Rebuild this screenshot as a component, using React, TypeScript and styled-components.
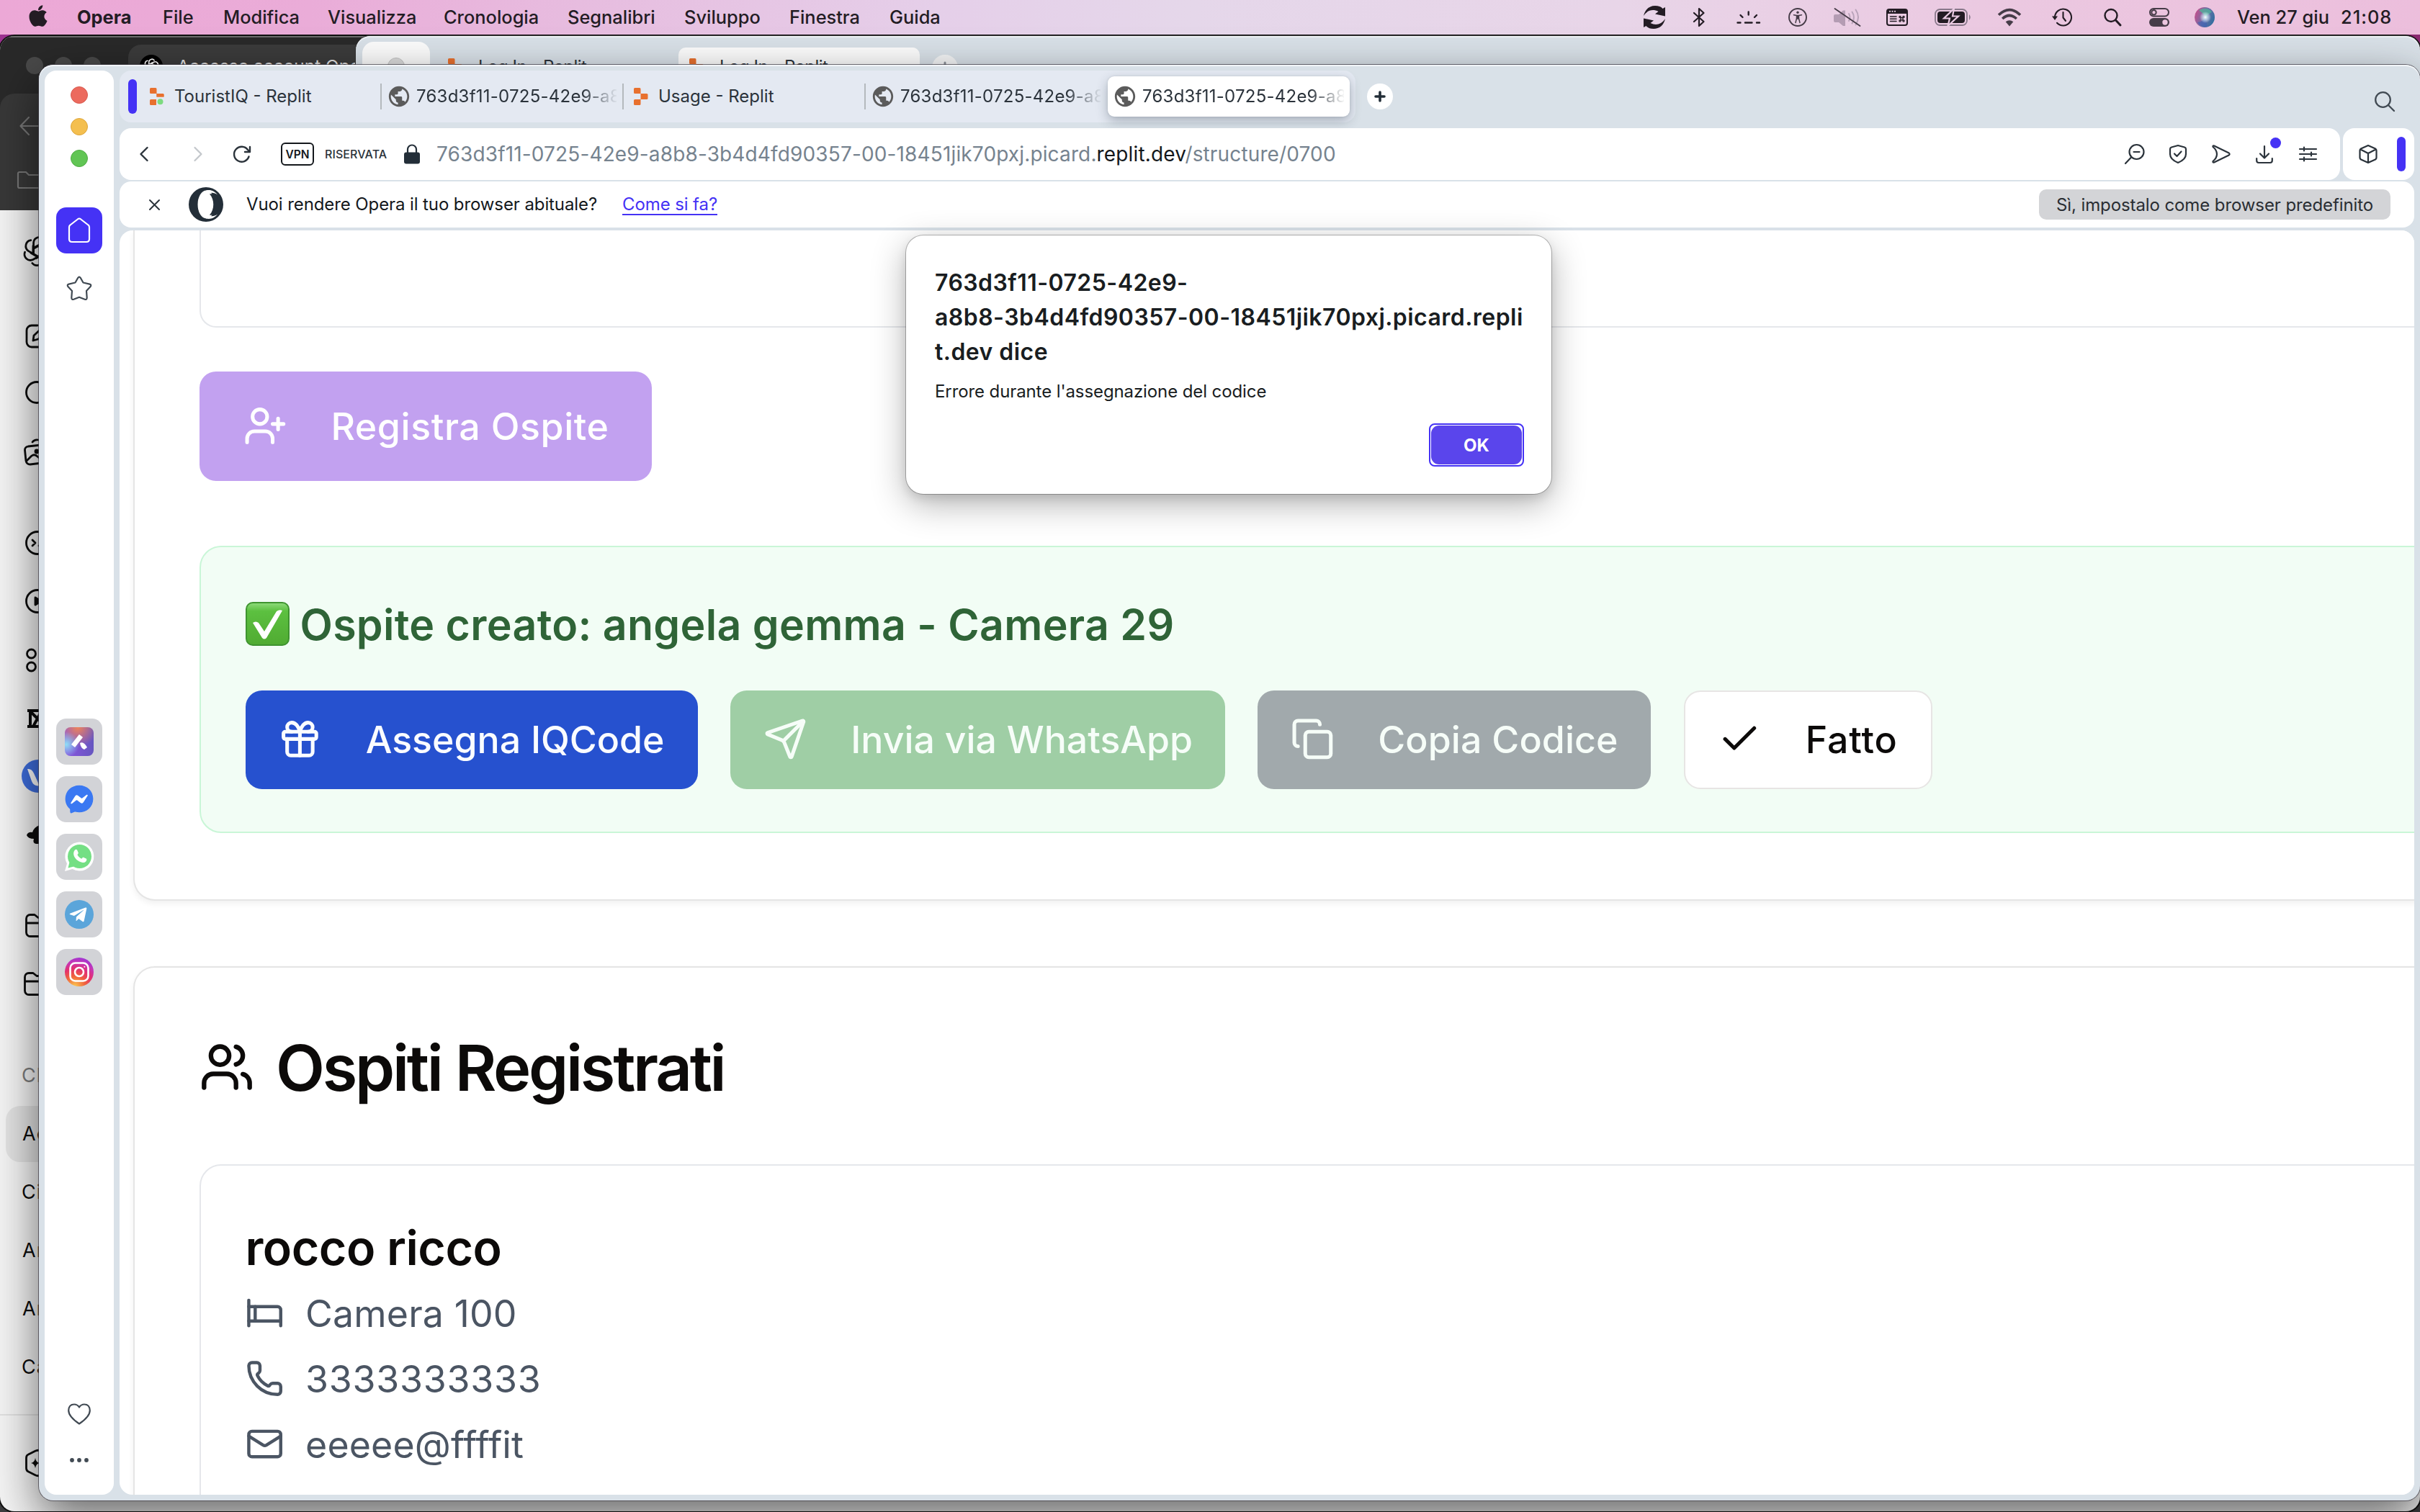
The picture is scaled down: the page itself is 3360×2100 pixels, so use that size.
import React from "react";
import styled, { createGlobalStyle, css } from "styled-components";
import { Bed, Check, Copy, Gift, Mail, Phone, Send, UserPlus, Users } from "lucide-react";
import { FaApple, FaFacebookMessenger, FaTelegramPlane } from "react-icons/fa";
import { MdPublic } from "react-icons/md";

const Global = createGlobalStyle`
  * { box-sizing: border-box; }
  html, body { margin: 0; padding: 0; }
  body { width: 3360px; height: 2100px; overflow: hidden; }
  body, button { font-family: Inter, "Liberation Sans", sans-serif; }
  svg { display: block; flex: none; overflow: visible; }
`;

const Desktop = styled.div`
  position: relative;
  width: 3360px;
  height: 2100px;
  overflow: hidden;
  background: linear-gradient(90deg, #9c3290 0, #7a2068 40%, #8a2a70 100%) 0 0 / 100% 100px no-repeat, #3c3c3e;
`;

/* ---------- macOS menu bar ---------- */

const MenuBar = styled.header`
  display: flex;
  align-items: center;
  height: 48px;
  padding-left: 39px;
  color: #231c24;
  font-size: 25.4px;
  font-weight: 500;
  background: linear-gradient(90deg, #eca8d6 0, #eaacd8 430px, #e7bcdf 800px, #e5cfe9 1300px, #e5d7ea 1650px, #e8d5e8 2250px, #ebc9e1 2750px, #ecbedc 3360px);
`;
const AppleSlot = styled.span`
  width: 68px;
  padding-bottom: 5px;
`;
const AppleIcon = styled(FaApple)`
  margin-left: -3px;
`;
const MenuItem = styled.span<{ $w: number; $bold?: boolean }>`
  width: ${(p) => p.$w}px;
  margin-top: -2px;
  white-space: nowrap;
  font-weight: ${(p) => (p.$bold ? 700 : 500)};
`;
const StatusArea = styled.div`
  display: flex;
  align-items: center;
  height: 48px;
  margin-left: auto;
  padding-right: 36px;
`;
const StatusSlot = styled.span<{ $w: number; $ml?: number }>`
  display: flex;
  justify-content: center;
  width: ${(p) => p.$w}px;
  margin-left: ${(p) => p.$ml ?? 0}px;
`;
const ClockText = styled.span<{ $w: number; $ls?: number }>`
  width: ${(p) => p.$w}px;
  margin-top: -2px;
  letter-spacing: ${(p) => p.$ls ?? 0}px;
  white-space: nowrap;
`;

/* ---------- windows in the background ---------- */

const ChatWindow = styled.section`
  position: absolute;
  left: 0;
  top: 50px;
  width: 3360px;
  height: 2049px;
  display: flex;
  flex-direction: column;
  overflow: hidden;
  border-radius: 20px;
  background: #f4f4f4;
  box-shadow: 0 0 0 2px #111;
`;
const ChatTabs = styled.div`
  display: flex;
  height: 80px;
  padding: 12px 0 0 36px;
  background: #292929;
  box-shadow: inset 0 2px 0 #6c6c6c;
`;
const DimLights = styled.div`
  display: flex;
  gap: 16px;
  padding-top: 17px;
  width: 142px;
`;
const DimLight = styled.i`
  width: 24px;
  height: 24px;
  border-radius: 50%;
  background: #494949;
`;
const ChatTab = styled.div`
  display: flex;
  align-items: center;
  gap: 20px;
  width: 420px;
  padding: 0 0 8px 16px;
  border-radius: 18px 18px 0 0;
  background: #3b3b3b;
  color: #e3e3e3;
  font-size: 24.4px;
  white-space: nowrap;
`;
const ChatToolbarWrap = styled.div`
  background: #292929;
`;
const ChatToolbar = styled.div`
  display: flex;
  flex-direction: column;
  height: 162px;
  padding: 32px 0 0 27px;
  gap: 50px;
  border-radius: 20px 0 0 0;
  background: #383838;
`;
const ToolbarFolder = styled.svg`
  margin-left: -3px;
`;
const ChatRail = styled.nav`
  display: flex;
  flex-direction: column;
  width: 520px;
  color: #0d0d0d;
`;
const RailItem = styled.div<{ $mt?: number; $active?: boolean; $muted?: boolean; $pl?: number }>`
  display: flex;
  align-items: center;
  height: 78px;
  margin-top: ${(p) => p.$mt ?? 3}px;
  padding-left: ${(p) => p.$pl ?? 35}px;
  padding-bottom: 2px;
  font-size: 27px;
  letter-spacing: 1px;
  color: ${(p) => (p.$muted ? "#7d7d7d" : "#0d0d0d")};
  ${(p) =>
    p.$active &&
    css`
      margin-left: 8px;
      border-radius: 20px;
      background: #e3e3e3;
      padding-left: ${(p.$pl ?? 31) - 8}px;
    `}
`;
const RailFooter = styled.div`
  display: flex;
  align-items: center;
  height: 134px;
  margin-top: 26px;
  padding-left: 35px;
  border-top: 2px solid #e0e0e0;
`;

const RearWindow = styled.section`
  position: absolute;
  left: 494px;
  top: 50px;
  width: 2866px;
  height: 300px;
  display: flex;
  align-items: flex-start;
  padding: 8px 8px 0 9px;
  border-radius: 20px 20px 0 0;
  background: #d9e1e8;
  box-shadow: 0 0 0 1px #333, inset 0 2px 0 #eef2f5;
`;
const RearRail = styled.div`
  width: 94px;
  height: 250px;
  padding: 22px 0 0 35px;
  border-radius: 16px;
  background: #fcfcfc;
`;
const RearDot = styled.i`
  display: block;
  width: 24px;
  height: 24px;
  border-radius: 50%;
  background: #dcdcdc;
  border: 1px solid #c4c4c4;
`;
const RearTab = styled.div<{ $active?: boolean }>`
  display: flex;
  align-items: center;
  gap: 22px;
  width: 335px;
  height: 56px;
  margin: 8px 0 0 ${(p) => (p.$active ? 0 : 10)}px;
  padding: 0 0 3px 15px;
  border-radius: 10px;
  font-size: 24px;
  letter-spacing: -0.5px;
  color: #2b333b;
  background: ${(p) => (p.$active ? "#fdfdfd" : "transparent")};
`;
const RearPlus = styled.div`
  display: grid;
  place-items: center;
  width: 36px;
  height: 36px;
  margin: 18px 0 0 17px;
  border-radius: 50%;
  background: #f4f5f6;
`;

/* ---------- Opera window ---------- */

const OperaWindow = styled.section`
  position: absolute;
  left: 54px;
  top: 90px;
  width: 3306px;
  height: 1994px;
  display: flex;
  gap: 8px;
  padding: 8px;
  border-radius: 20px;
  background: #d9e1e8;
  box-shadow: 0 0 0 1px rgba(60, 55, 65, 0.7), inset 0 2px 0 #f2f5f8, 0 24px 64px rgba(0, 0, 0, 0.58);
`;
const Sidebar = styled.nav`
  display: flex;
  flex-direction: column;
  align-items: center;
  width: 96px;
  padding: 22px 0 45px;
  border-radius: 16px;
  background: #fff;
`;
const Light = styled.i<{ $c: string; $edge: string }>`
  width: 24px;
  height: 24px;
  margin-bottom: 20px;
  border-radius: 50%;
  background: ${(p) => p.$c};
  border: 1px solid ${(p) => p.$edge};
`;
const HomeTile = styled.div`
  display: grid;
  place-items: center;
  width: 64px;
  height: 64px;
  margin-top: 36px;
  border-radius: 14px;
  background: #4532f5;
`;
const StarSlot = styled.div`
  height: 37px;
  margin-top: 31px;
`;
const AppTiles = styled.div`
  display: flex;
  flex-direction: column;
  gap: 16px;
  margin-top: 578px;
`;
const AppTile = styled.div`
  display: grid;
  place-items: center;
  width: 64px;
  height: 64px;
  border-radius: 14px;
  background: #d2d3d7;
`;
const AppDisc = styled.span<{ $bg: string; $r?: string }>`
  display: grid;
  place-items: center;
  width: 40px;
  height: 40px;
  border-radius: ${(p) => p.$r ?? "50%"};
  background: ${(p) => p.$bg};
  color: #fff;
`;
const Plane = styled(FaTelegramPlane)`
  margin-left: -3px;
`;
const SidebarFoot = styled.div`
  display: flex;
  flex-direction: column;
  align-items: center;
  gap: 46px;
  margin-top: auto;
`;
const Main = styled.div`
  display: flex;
  flex-direction: column;
  flex: 1;
  min-width: 0;
`;
const TabRow = styled.div`
  display: flex;
  height: 80px;
`;
const TabGroup = styled.div`
  display: flex;
  align-items: center;
  width: 1716px;
  height: 72px;
  padding: 0 8px 0 12px;
  border-radius: 16px;
  background: #e4e9f2;
`;
const IslandBar = styled.i<{ $h: number }>`
  width: 12px;
  height: ${(p) => p.$h}px;
  border-radius: 6px;
  background: #4532f5;
  flex: none;
`;
const Tab = styled.div<{ $active?: boolean; $ml?: number }>`
  display: flex;
  align-items: center;
  gap: 10px;
  width: ${(p) => (p.$active ? 336 : 334)}px;
  height: 56px;
  margin-left: ${(p) => p.$ml ?? 0}px;
  padding: 0 8px 0 10px;
  font-size: 24px;
  color: #2b333b;
  flex: none;
  ${(p) =>
    p.$active &&
    css`
      border-radius: 9px;
      background: #fff;
      box-shadow: 0 6px 16px rgba(40, 55, 70, 0.32), 0 0 3px rgba(40, 55, 70, 0.15);
    `}
`;
const TabIcon = styled.span`
  display: flex;
  align-items: center;
  justify-content: center;
  width: 28px;
  height: 28px;
  flex: none;
  color: #5b5b5b;
`;
const TabTitle = styled.span<{ $fade?: boolean }>`
  flex: 1;
  overflow: hidden;
  white-space: nowrap;
  line-height: 36px;
  ${(p) =>
    p.$fade &&
    css`
      letter-spacing: 0.24px;
      mask-image: linear-gradient(90deg, #000 calc(100% - 48px), transparent calc(100% + 2px));
    `}
`;
const TabSeparator = styled.i`
  width: 2px;
  height: 36px;
  background: #b4b9bd;
  flex: none;
`;
const NewTab = styled.div`
  display: grid;
  place-items: center;
  width: 36px;
  height: 36px;
  margin: 18px 0 0 16px;
  border-radius: 50%;
  background: #fff;
`;
const TabSearch = styled.div`
  margin: 29px 27px 0 auto;
`;
const AddressRow = styled.div`
  display: flex;
  gap: 4px;
  height: 72px;
`;
const AddressBar = styled.div`
  display: flex;
  align-items: center;
  flex: 1;
  padding: 0 29px 0 26px;
  border-radius: 16px;
  background: #fff;
`;
const AddressSlot = styled.span<{ $w: number; $ml?: number }>`
  display: flex;
  justify-content: center;
  width: ${(p) => p.$w}px;
  margin-left: ${(p) => p.$ml ?? 0}px;
`;
const Vpn = styled.span`
  display: grid;
  place-items: center;
  width: 46px;
  height: 32px;
  margin-left: 41px;
  border: 2px solid #14181c;
  border-radius: 6px;
  font-size: 15.5px;
  font-weight: 600;
  color: #14181c;
`;
const PrivateLabel = styled.span`
  width: 90px;
  margin-left: 15px;
  font-size: 16px;
  font-weight: 500;
  letter-spacing: 0.1px;
  color: #2b333b;
`;
const Url = styled.span`
  margin-left: 22px;
  font-size: 28px;
  letter-spacing: 0.14px;
  color: #76838f;
  white-space: nowrap;
  b {
    font-weight: 400;
    color: #14181c;
  }
`;
const AddressActions = styled.div`
  display: flex;
  align-items: center;
  gap: 28px;
  margin-left: auto;
`;
const ActionSlot = styled.span`
  position: relative;
  display: flex;
  justify-content: center;
  width: 32px;
`;
const Badge = styled.i`
  position: absolute;
  right: -7px;
  top: -11px;
  width: 15px;
  height: 15px;
  border-radius: 50%;
  background: #4532f5;
`;
const AddressSide = styled.div`
  display: flex;
  align-items: center;
  justify-content: space-between;
  width: 99px;
  padding: 0 12px 0 22px;
  border-radius: 16px;
  background: #fff;
`;
const InfoBar = styled.div`
  display: flex;
  align-items: center;
  height: 64px;
  margin: 2px 0 4px;
  padding: 0 33px 0 41px;
  border-radius: 16px;
  background: #fff;
  font-size: 24px;
  letter-spacing: -0.1px;
  color: #14181c;
`;
const InfoText = styled.span`
  width: 522px;
  margin-left: 32px;
  margin-top: -1px;
  white-space: nowrap;
`;
const InfoLink = styled.span`
  color: #4532f5;
  border-bottom: 2px solid #4532f5;
  line-height: 26px;
  margin-top: 1px;
`;
const InfoButton = styled.button`
  width: 488px;
  height: 42px;
  margin-left: auto;
  padding: 0;
  border: 0;
  border-radius: 10px;
  background: #d3d4d7;
  font-size: 24px;
  letter-spacing: -0.1px;
  color: #2a2e33;
  white-space: nowrap;
`;

/* ---------- page ---------- */

const Page = styled.main`
  position: relative;
  flex: 1;
  min-height: 0;
  overflow: hidden;
  padding-left: 19px;
  border-radius: 18px;
  background: #fff;
`;
const Card = styled.section<{ $cut?: boolean }>`
  width: 3500px;
  padding: ${(p) => (p.$cut ? "0 90px 92px" : "92px 90px 200px")};
  margin-bottom: 91px;
  border: 2px solid #e5e5e5;
  border-radius: 30px;
  background: #fff;
  box-shadow: 0 4px 8px rgba(0, 0, 0, 0.06);
  ${(p) =>
    p.$cut &&
    css`
      border-top: 0;
      border-top-left-radius: 0;
    `}
`;
const FieldTail = styled.div`
  height: 135px;
  border: 2px solid #e5e7eb;
  border-top: 0;
  border-radius: 0 0 23px 23px;
`;
const Btn = styled.button<{ $w: number; $h?: number; $bg: string; $c: string; $outline?: boolean; $pad?: number; $ls?: number }>`
  display: flex;
  align-items: center;
  gap: 60.8px;
  width: ${(p) => p.$w}px;
  height: ${(p) => p.$h ?? 136.5}px;
  padding: 0 0 1px ${(p) => p.$pad ?? 45.6}px;
  border: ${(p) => (p.$outline ? "2px solid #e7e5e4" : "0")};
  border-radius: 22.8px;
  background: ${(p) => p.$bg};
  color: ${(p) => p.$c};
  font-size: 51.8px;
  font-weight: 500;
  letter-spacing: ${(p) => p.$ls ?? 0}px;
  white-space: nowrap;
  svg {
    width: 60.8px;
    height: 60.8px;
  }
`;
const RegisterWrap = styled.div`
  padding: 61px 0 90px;
`;
const SuccessPanel = styled.div`
  height: 399px;
  padding: 61px 61.5px;
  border: 2px solid #c9f6d7;
  border-radius: 30px;
  background: #f2fdf5;
`;
const SuccessTitle = styled.h4`
  display: flex;
  align-items: center;
  gap: 15px;
  height: 91px;
  margin: 0 0 47px;
  font-size: 59px;
  font-weight: 600;
  letter-spacing: 0.3px;
  color: #2f6437;
`;
const TitleText = styled.span`
  padding-top: 1px;
`;
const ButtonRow = styled.div`
  display: flex;
  gap: 45.5px;
`;
const CardTitle = styled.h3`
  display: flex;
  align-items: center;
  gap: 30px;
  height: 91px;
  margin: 0 0 90px;
  font-size: 88.4px;
  font-weight: 600;
  letter-spacing: -3.25px;
  color: #0c0a09;
`;
const GuestCard = styled.article`
  height: 700px;
  padding: 61px 61.5px;
  border: 2px solid #e5e7eb;
  border-radius: 30px;
`;
const GuestName = styled.h4`
  margin: 0;
  font-size: 66.3px;
  line-height: 106px;
  font-weight: 600;
  letter-spacing: -0.5px;
  color: #0c0a09;
`;
const GuestRow = styled.p<{ $ls?: number }>`
  display: flex;
  align-items: center;
  gap: 30.4px;
  height: 76px;
  margin: 0 0 15px;
  font-size: 51.8px;
  letter-spacing: ${(p) => p.$ls ?? 0.15}px;
  color: #4b5563;
  svg {
    width: 53.2px;
    height: 53.2px;
  }
`;

/* ---------- alert ---------- */

const Dialog = styled.div`
  position: absolute;
  left: 1204px;
  top: 237px;
  width: 896px;
  height: 359px;
  display: flex;
  flex-direction: column;
  padding: 42px 38px 38px 40px;
  border-radius: 24px;
  background: #fff;
  box-shadow: 0 0 0 1px rgba(0, 0, 0, 0.26), 0 14px 48px rgba(0, 0, 0, 0.3), 0 6px 14px rgba(0, 0, 0, 0.1);
  color: #191d21;
`;
const DialogTitle = styled.h2`
  margin: 0;
  font-size: 32px;
  line-height: 48px;
  font-weight: 600;
  letter-spacing: 0.45px;
  white-space: nowrap;
`;
const DialogText = styled.p`
  margin: 13px 0 0;
  font-size: 24px;
  line-height: 36px;
  letter-spacing: -0.1px;
`;
const OkRing = styled.div`
  align-self: flex-end;
  display: flex;
  width: 132px;
  height: 60px;
  margin-top: auto;
  padding: 1px;
  border: 2px solid #4532f5;
  border-radius: 8px;
`;
const OkButton = styled.button`
  flex: 1;
  border: 0;
  border-radius: 11px;
  background: #5a45ec;
  color: #fff;
  font-size: 24px;
  font-weight: 700;
`;

/* ---------- drawings ---------- */

const stroke = (w: number, c = "currentColor") =>
  ({ fill: "none", stroke: c, strokeWidth: w, strokeLinecap: "round", strokeLinejoin: "round" }) as const;

const ReplitMark = ({ live }: { live?: boolean }) => (
  <svg width="20" height="24" viewBox="0 0 20 24">
    <path d="M1.500 0H8a1.500 1.500 0 0 1 1.500 1.500V8H1.500A1.500 1.500 0 0 1 0 6.500V1.500A1.500 1.500 0 0 1 1.500 0z" fill="#e8702e" />
    <path d="M9.500 8H18a1.500 1.500 0 0 1 1.500 1.500V14.500A1.500 1.500 0 0 1 18 16H9.500z" fill="#e8702e" />
    <path d="M1.500 16H9.500V22.500A1.500 1.500 0 0 1 8 24H1.500A1.500 1.500 0 0 1 0 22.500V17.500A1.500 1.500 0 0 1 1.500 16z" fill="#e8702e" />
    {live && <path d="M9 12.500h11V24H9z" fill="#e4e9f2" />}
    {live && <path d="M9.500 8H18a1.500 1.500 0 0 1 1.500 1.500V12.500H9.500z" fill="#e8702e" />}
    {live && <circle cx="14.500" cy="19.300" r="4" fill="#7ddb80" />}
  </svg>
);

const StatusIcons = () => (
  <>
    <StatusSlot $w={30}>
      <svg width="30" height="32" viewBox="0 0 30 32" fill="#231c24">
        <path d="M0 14C2 5 8 0 16 0c5 0 8 1 10.500 4L30 2v12.500L16 11.500l4.500-3.500C13 4 5 6 0 14z" />
        <path d="M30 18c-2 9-8 14-16 14-5 0-8-1-10.500-4L0 30V17.500l14 3-4.500 3.500C17 28 25 26 30 18z" />
      </svg>
    </StatusSlot>
    <StatusSlot $w={16} $ml={39}>
      <svg width="16" height="26" viewBox="0 0 16 26" {...stroke(2.2)}>
        <path d="M1 7l13.500 12L8 25V1l6.500 6L1 19" />
      </svg>
    </StatusSlot>
    <StatusSlot $w={33} $ml={44}>
      <svg width="33" height="18" viewBox="0 0 33 18" {...stroke(2.4)}>
        <path d="M1.500 16.500h4M12 16.500h9.500M28 16.500h4M16.700 1.500v4M5.500 6l3 3M28 6l-3 3" />
      </svg>
    </StatusSlot>
    <StatusSlot $w={26} $ml={39}>
      <svg width="26" height="26" viewBox="0 0 26 26" {...stroke(1.9, "#463c48")}>
        <circle cx="13" cy="13" r="12" />
        <circle cx="13" cy="6.300" r="1.700" fill="#463c48" stroke="none" />
        <path d="M7.500 9.700l4 .8h3l4-.8M11.500 10.500v4l-1.500 6M14.500 10.500v4l1.500 6M13 10.500v5" strokeWidth="1.500" />
      </svg>
    </StatusSlot>
    <StatusSlot $w={38} $ml={37}>
      <svg width="38" height="26" viewBox="0 0 38 26">
        <path d="M2 9h5l6-5.500h3V25h-3l-6-5H2q-2 0-2-2v-7q0-2 2-2z" fill="#b49cb3" />
        <g {...stroke(2, "#b9a3ba")}>
          <path d="M21 8q3 5 0 10M25.500 5.500q5 7.500 0 16M30.500 2.500q7 10 0 21" />
        </g>
        <path d="M1.500 1l35 24" {...stroke(1.8, "#463c48")} />
      </svg>
    </StatusSlot>
    <StatusSlot $w={30} $ml={35}>
      <svg width="30" height="24" viewBox="0 0 30 24">
        <rect x="1" y="1" width="28" height="22" rx="3" {...stroke(2)} />
        <path d="M1 1h28v6H1z" fill="#231c24" />
        <circle cx="5" cy="3.800" r="1.100" fill="#e8d0e6" />
        <circle cx="8.500" cy="3.800" r="1.100" fill="#e8d0e6" />
        <circle cx="12" cy="3.800" r="1.100" fill="#e8d0e6" />
        <path d="M5.500 11H14M5.500 14.200H14M5.500 17.400H14" {...stroke(1.5)} />
        <path d="M20 12.500v3.500M23 12.500v3.500M19.800 12.700h3.500M19.800 15.800h3.500" {...stroke(1.3)} />
        <g {...stroke(1.3)}>
          <circle cx="19" cy="11.600" r="1.100" />
          <circle cx="24" cy="11.600" r="1.100" />
          <circle cx="19" cy="17" r="1.100" />
          <circle cx="24" cy="17" r="1.100" />
        </g>
      </svg>
    </StatusSlot>
    <StatusSlot $w={51} $ml={37}>
      <svg width="51" height="24" viewBox="0 0 51 24">
        <rect x="1" y="1" width="44" height="22" rx="6.500" {...stroke(1.8, "#88788a")} />
        <rect x="4" y="4" width="38" height="16" rx="4" fill="#231c24" />
        <path d="M48 8q3.500 4 0 8z" fill="#88788a" />
        <path d="M27 0L13 13.500h8L18.500 24 33 10.500h-8z" fill="#231c24" stroke="#e9cae2" strokeWidth="2.200" />
      </svg>
    </StatusSlot>
    <StatusSlot $w={34} $ml={36}>
      <svg width="34" height="25" viewBox="0 0 34 25">
        <g {...stroke(3.6, "#463c48")} strokeLinecap="butt">
          <path d="M2 8.800q15-14.500 30 0M7.200 14q9.800-9 19.600 0" />
        </g>
        <path d="M17 24.500l-5.300-6.300q5.300-4 10.600 0z" fill="#463c48" />
      </svg>
    </StatusSlot>
    <StatusSlot $w={28} $ml={42}>
      <svg width="28" height="26" viewBox="0 0 28 26" {...stroke(2.1)}>
        <path d="M4 13A11.500 11.500 0 1 1 7 20.800M15.500 6v7.500l3.500 4.500" />
        <path d="M0 11.500h8L4 17z" fill="#231c24" stroke="none" />
      </svg>
    </StatusSlot>
    <StatusSlot $w={25} $ml={44}>
      <svg width="25" height="26" viewBox="0 0 25 26" {...stroke(2.4)}>
        <circle cx="10" cy="10.500" r="8.500" />
        <path d="M16.500 17l6.500 7" strokeWidth="3" />
      </svg>
    </StatusSlot>
    <StatusSlot $w={28} $ml={38}>
      <svg width="28" height="26" viewBox="0 0 28 26">
        <rect x="1" y="1" width="26" height="10.500" rx="5.200" {...stroke(2, "#463c48")} />
        <circle cx="6.500" cy="6.200" r="3.200" {...stroke(2, "#463c48")} />
        <rect x="0" y="14" width="28" height="12" rx="6" fill="#463c48" />
        <circle cx="22" cy="20" r="3.700" fill="#ecc6df" />
      </svg>
    </StatusSlot>
    <StatusSlot $w={28} $ml={35}>
      <svg width="28" height="28" viewBox="0 0 28 28">
        <defs>
          <linearGradient id="siri" x1="0" y1="0.3" x2="1" y2="0.7">
            <stop offset="0" stopColor="#c4508c" />
            <stop offset="0.5" stopColor="#6d6fa8" />
            <stop offset="1" stopColor="#2c6f9e" />
          </linearGradient>
          <radialGradient id="siriGlow">
            <stop offset="0" stopColor="#fff" />
            <stop offset="0.4" stopColor="#d9f0fa" stopOpacity="0.7" />
            <stop offset="1" stopColor="#fff" stopOpacity="0" />
          </radialGradient>
        </defs>
        <circle cx="14" cy="14" r="14" fill="url(#siri)" />
        <path d="M6 4.500a13 13 0 0 1 18 2q-6 4-9 8-2-6-9-10z" fill="#4fb39a" opacity="0.75" />
        <path d="M4 21q8-1 11-7l3 13q-9 2-14-6z" fill="#3a63b4" opacity="0.6" />
        <circle cx="15" cy="14" r="8" fill="url(#siriGlow)" />
      </svg>
    </StatusSlot>
  </>
);

const knotPetals = [0, 60, 120, 180, 240, 300].map((a) => (
  <path key={a} transform={`rotate(${a} 24 24)`} d="M17 20V11a9 9 0 0 1 16-5M17 20l8-4.500 10 6" />
));

const Folder = () => (
  <svg width="40" height="34" viewBox="0 0 40 34" {...stroke(2.8)}>
    <path d="M1.500 7a5.500 5.500 0 0 1 5.500-5.500h6l5 4h14a5.500 5.500 0 0 1 5.500 5.500v15a5.500 5.500 0 0 1-5.500 5.500H7a5.500 5.500 0 0 1-5.500-5.500zM1.500 13h36" />
  </svg>
);

const OperaO = () => (
  <svg width="48" height="48" viewBox="0 0 48 48">
    <circle cx="24" cy="24" r="24" fill="#232e38" />
    <ellipse cx="24.500" cy="24" rx="12" ry="19.500" fill="#fff" />
    <path d="M24 4.500c7-1.500 12 1 16 6-4-3-9-3.500-13-1.500zM24 43.500c7 1.500 12-1 16-6-4 3-9 3.500-13 1.500z" fill="#fff" />
    <path d="M29 9.500C36 17 36 31 29 38.500c5 1 9-2 11-5 3-6 3-13 0-19-2-3-6-6-11-5z" fill="#232e38" />
  </svg>
);

const GreenCheck = () => (
  <svg width="61" height="61" viewBox="0 0 61 61">
    <defs>
      <linearGradient id="gc" x1="0" y1="0" x2="0" y2="1">
        <stop offset="0" stopColor="#8fdc7c" />
        <stop offset="0.2" stopColor="#5cc040" />
        <stop offset="1" stopColor="#50ab32" />
      </linearGradient>
    </defs>
    <rect x="1" y="1" width="59" height="59" rx="9" fill="url(#gc)" stroke="#3f9430" strokeWidth="2" />
    <path d="M10 29q4-3 8 0l8 12L43 13q4-3 8-1L29 50q-3 3-6 0z" fill="#fff" />
  </svg>
);

const menus: [string, number, boolean?][] = [
  ["Opera", 119, true],
  ["File", 84],
  ["Modifica", 145],
  ["Visualizza", 161],
  ["Cronologia", 172],
  ["Segnalibri", 162],
  ["Sviluppo", 146],
  ["Finestra", 139],
  ["Guida", 90],
];

const host = "763d3f11-0725-42e9-a8b8-3b4d4fd90357-00-18451jik70pxj.picard.";

const GlobeTab = ({ active, ml }: { active?: boolean; ml?: number }) => (
  <Tab $active={active} $ml={ml}>
    <TabIcon>
      <MdPublic size={34} />
    </TabIcon>
    <TabTitle $fade>763d3f11-0725-42e9-a8b8</TabTitle>
  </Tab>
);

export default function App() {
  return (
    <Desktop>
      <Global />
      <MenuBar>
        <AppleSlot>
          <AppleIcon size={34} />
        </AppleSlot>
        {menus.map(([label, w, bold]) => (
          <MenuItem key={label} $w={w} $bold={bold}>
            {label}
          </MenuItem>
        ))}
        <StatusArea>
          <StatusIcons />
          <StatusSlot $w={31} />
          <ClockText $w={144}>Ven 27 giu</ClockText>
          <ClockText $w={74} $ls={1}>
            21:08
          </ClockText>
        </StatusArea>
      </MenuBar>

      <ChatWindow>
        <ChatTabs>
          <DimLights>
            <DimLight />
            <DimLight />
            <DimLight />
          </DimLights>
          <ChatTab>
            <svg width="32" height="32" viewBox="0 0 32 32">
              <circle cx="16" cy="16" r="16" fill="#000" />
              <svg x="5" y="5" width="22" height="22" viewBox="0 0 48 48">
                <g {...stroke(3.5, "#fff")}>{knotPetals}</g>
              </svg>
            </svg>
            Accesso account OpenAI
          </ChatTab>
        </ChatTabs>
        <ChatToolbarWrap>
          <ChatToolbar>
            <svg width="28" height="26" viewBox="0 0 28 26" {...stroke(2.2, "#777")}>
              <path d="M13 1L1.500 13 13 25M1.500 13H28" />
            </svg>
            <ToolbarFolder width="34" height="24" viewBox="0 0 34 24" {...stroke(2.2, "#777")}>
              <path d="M1 3a2 2 0 0 1 2-2h9l4 4h15a2 2 0 0 1 2 2v14a2 2 0 0 1-2 2H3a2 2 0 0 1-2-2z" />
            </ToolbarFolder>
          </ChatToolbar>
        </ChatToolbarWrap>
        <ChatRail>
          <RailItem $mt={19} $pl={31}>
            <svg width="44" height="44" viewBox="0 0 48 48" {...stroke(3)}>
              {knotPetals}
            </svg>
          </RailItem>
          <RailItem $mt={40}>
            <svg width="36" height="34" viewBox="0 0 36 34" {...stroke(2.8)}>
              <path d="M17 2H9a7 7 0 0 0-7 7v16a7 7 0 0 0 7 7h16a7 7 0 0 0 7-7v-6M11 23l1-7L28 1l5 5-15 15z" />
            </svg>
          </RailItem>
          <RailItem $mt={0}>
            <svg width="36" height="34" viewBox="0 0 36 34" {...stroke(2.8)}>
              <circle cx="16" cy="17" r="14.500" />
              <path d="M27 27l7 7" />
            </svg>
          </RailItem>
          <RailItem $mt={5} $pl={33}>
            <svg width="40" height="38" viewBox="0 0 40 38" {...stroke(2.8)}>
              <path d="M12 5q3-4 8-3l14 3q5 1 4 6l-2 13M6 11l18-2q5 0 5 5l1 15q0 5-5 5l-16 2q-5 0-6-5L1.500 16q0-4 4.500-5zM4 31l7-7q4-3 8 1l9 8" />
              <circle cx="18" cy="18" r="2" fill="currentColor" />
            </svg>
          </RailItem>
          <RailItem $mt={48}>
            <svg width="36" height="34" viewBox="0 0 36 34" {...stroke(2.8)}>
              <circle cx="17" cy="17" r="15.500" />
              <path d="M10 13l4 4-4 4M19 21h6" />
            </svg>
          </RailItem>
          <RailItem>
            <svg width="36" height="34" viewBox="0 0 36 34" {...stroke(2.8)}>
              <circle cx="17" cy="17" r="15.500" />
              <path d="M14 12l8 5-8 5z" fill="currentColor" />
            </svg>
          </RailItem>
          <RailItem $mt={4}>
            <svg width="36" height="34" viewBox="0 0 36 34" {...stroke(2.8)}>
              <circle cx="8.500" cy="8" r="6" />
              <circle cx="8.500" cy="26" r="6" />
              <circle cx="27" cy="8" r="6" />
              <circle cx="27" cy="26" r="6" />
            </svg>
          </RailItem>
          <RailItem $pl={38}>
            <svg width="36" height="26" viewBox="0 0 36 26" {...stroke(4)}>
              <path d="M0 2h36M0 24h36M4 2v22M4 3l20 20M20 2L8 24" strokeLinecap="butt" />
            </svg>
          </RailItem>
          <RailItem $mt={2} $pl={30}>
            <svg width="46" height="46" viewBox="0 0 46 46">
              <circle cx="23" cy="23" r="23" fill="#3f6fe0" />
              <path d="M8 13q6-1 9 6l5 11q2 6 4 6-9 2-12-6z" fill="#fff" />
            </svg>
          </RailItem>
          <RailItem $mt={4} $pl={37}>
            <svg width="40" height="30" viewBox="0 0 40 30" fill="#0d0d0d">
              <path d="M0 15q2-5 8-4 2-7 10-10l18 8v18H13q-5-1-3-7-8 0-10-5z" />
            </svg>
          </RailItem>
          <RailItem $mt={48}>
            <Folder />
          </RailItem>
          <RailItem $pl={33}>
            <Folder />
          </RailItem>
          <RailItem $mt={48} $muted $pl={30}>
            Chat
          </RailItem>
          <RailItem $active>Accesso</RailItem>
          <RailItem $pl={30}>Ciao</RailItem>
          <RailItem $pl={31}>Analisi</RailItem>
          <RailItem $pl={31}>Analisi</RailItem>
          <RailItem $pl={30}>Caso</RailItem>
          <RailFooter>
            <svg width="38" height="38" viewBox="0 0 38 38" {...stroke(2.8)}>
              <path d="M1.500 12q0-4 3-5l10-5q4-1.500 8 0l10 5q3 1 3 5v14q0 4-3 5l-10 5q-4 1.500-8 0l-10-5q-3-1-3-5z" />
              <path d="M14 12q1 6 6 7-5 1-6 7-1-6-6-7 5-1 6-7z" fill="currentColor" stroke="none" />
            </svg>
          </RailFooter>
        </ChatRail>
      </ChatWindow>

      <RearWindow>
        <RearRail>
          <RearDot />
        </RearRail>
        <RearTab>
          <ReplitMark />
          Log In - Replit
        </RearTab>
        <RearTab $active>
          <ReplitMark />
          Log In - Replit
        </RearTab>
        <RearPlus>
          <svg width="16" height="16" viewBox="0 0 16 16" {...stroke(3, "#8d9399")}>
            <path d="M8 1v14M1 8h14" />
          </svg>
        </RearPlus>
      </RearWindow>

      <OperaWindow>
        <Sidebar>
          <Light $c="#ec6a5e" $edge="#d85a4f" />
          <Light $c="#f4bf4f" $edge="#dda63c" />
          <Light $c="#61c554" $edge="#51ac45" />
          <HomeTile>
            <svg width="32" height="36" viewBox="0 0 32 36" {...stroke(2.2, "#fff")}>
              <path d="M2 13.500q0-2 1.500-3L14.500 2q1.500-1 3 0l11 8.500q1.500 1 1.500 3V30q0 4-4 4H6q-4 0-4-4z" />
            </svg>
          </HomeTile>
          <StarSlot>
            <svg width="36" height="36" viewBox="0 0 36 36" {...stroke(2.2, "#414a53")}>
              <path d="M16.300 2.800q1.700-2.500 3.400 0l3.800 6.700 8.900 2.100q3 .9 1.200 3.500L28 21l.7 9.500q-.1 3.200-3 2.300L18 29.800l-7.700 3q-2.900.9-3-2.300L8 21l-5.600-5.900Q.6 12.500 3.600 11.600l8.900-2.100z" />
            </svg>
          </StarSlot>
          <AppTiles>
            <AppTile>
              <AppDisc
                $r="8px"
                $bg="radial-gradient(circle at 5% 60%, #8fe0f5 0, transparent 40%), radial-gradient(circle at 45% 0, #ee8359 0, transparent 60%), linear-gradient(90deg, #8a55e0, #6656c0)"
              >
                <svg width="26" height="26" viewBox="0 0 26 26">
                  <path d="M4.500 19L15.500 5" stroke="#fff" strokeWidth="6.500" />
                  <path d="M14 15q5-3 10 6l-4 3q-5-2-6-9z" fill="#fff" />
                </svg>
              </AppDisc>
            </AppTile>
            <AppTile>
              <AppDisc $bg="radial-gradient(circle, #fff 0 15px, transparent 16px)">
                <FaFacebookMessenger size={40} color="#3a78f2" />
              </AppDisc>
            </AppTile>
            <AppTile>
              <svg width="42" height="42" viewBox="0 0 42 42">
                <path d="M1 41l3-10.500A20 20 0 1 1 11.500 38z" fill="#fff" />
                <circle cx="21.500" cy="20.500" r="16.500" fill="#74df84" />
                <path d="M5.500 36.500l2-8 6 6z" fill="#74df84" />
                <path d="M15 11.500c1-1 2.600-1 3.200.3l1.500 3.500c.3.800-.2 1.600-1.300 2.800 1.500 3 3.300 4.700 6 5.700 1.300-1.700 2-2.200 2.900-1.800l3.300 1.600c1 .6.900 1.800.2 3.100-1.200 2-3.300 2.600-5.300 2.200-6.500-1.500-10.500-5.500-12-10-.8-2.700-.1-5.900 1.500-7.400z" fill="#fff" />
              </svg>
            </AppTile>
            <AppTile>
              <AppDisc $bg="#5ba5da">
                <Plane size={27} />
              </AppDisc>
            </AppTile>
            <AppTile>
              <AppDisc $bg="radial-gradient(circle at 35% 100%, #fbc850 0, #f0633c 30%, #e3306f 52%, #c736b5 70%, #7a35f0 100%)">
                <svg width="28" height="28" viewBox="0 0 28 28" {...stroke(2.6, "#fff")}>
                  <rect x="1.500" y="1.500" width="25" height="25" rx="7" />
                  <circle cx="14" cy="14" r="6" />
                  <circle cx="21.300" cy="6.700" r="1" fill="#fff" stroke="none" />
                </svg>
              </AppDisc>
            </AppTile>
          </AppTiles>
          <SidebarFoot>
            <svg width="32" height="30" viewBox="0 0 32 30" {...stroke(2.2, "#414a53")}>
              <path d="M16 28.500Q1.200 18.500 1.200 10 1.500 1.500 9 1.500q4.500 0 7 4 2.500-4 7-4 7.500 0 7.800 8.500 0 8.500-14.800 18.500z" />
            </svg>
            <svg width="26" height="6" viewBox="0 0 26 6" fill="#414a53">
              <circle cx="3" cy="3" r="2.900" />
              <circle cx="13" cy="3" r="2.900" />
              <circle cx="23" cy="3" r="2.900" />
            </svg>
          </SidebarFoot>
        </Sidebar>

        <Main>
          <TabRow>
            <TabGroup>
              <IslandBar $h={48} />
              <Tab $ml={4}>
                <TabIcon>
                  <ReplitMark live />
                </TabIcon>
                <TabTitle>TouristIQ - Replit</TabTitle>
              </Tab>
              <TabSeparator />
              <GlobeTab />
              <TabSeparator />
              <Tab>
                <TabIcon>
                  <ReplitMark />
                </TabIcon>
                <TabTitle>Usage - Replit</TabTitle>
              </Tab>
              <TabSeparator />
              <GlobeTab />
              <GlobeTab active ml={2} />
            </TabGroup>
            <NewTab>
              <svg width="16" height="16" viewBox="0 0 16 16" {...stroke(3.6, "#232e38")}>
                <path d="M8 2v12M2 8h12" />
              </svg>
            </NewTab>
            <TabSearch>
              <svg width="28" height="28" viewBox="0 0 28 28" {...stroke(2.3, "#414a53")}>
                <circle cx="11.500" cy="11.500" r="10.300" />
                <path d="M19 19l8 8" />
              </svg>
            </TabSearch>
          </TabRow>

          <AddressRow>
            <AddressBar>
              <AddressSlot $w={16}>
                <svg width="12" height="20" viewBox="0 0 12 20" {...stroke(2.4, "#2b333b")}>
                  <path d="M10.500 1L1.500 10l9 9" />
                </svg>
              </AddressSlot>
              <AddressSlot $w={16} $ml={59}>
                <svg width="12" height="20" viewBox="0 0 12 20" {...stroke(2.2, "#c3c7cb")}>
                  <path d="M1.500 1l9 9-9 9" />
                </svg>
              </AddressSlot>
              <AddressSlot $w={26} $ml={40}>
                <svg width="26" height="24" viewBox="0 0 26 24" {...stroke(2.4, "#2b333b")}>
                  <path d="M22.500 15.500A10.500 10.500 0 1 1 21 6l2.500 2.500M24 2v7h-7" />
                </svg>
              </AddressSlot>
              <Vpn>VPN</Vpn>
              <PrivateLabel>RISERVATA</PrivateLabel>
              <AddressSlot $w={24} $ml={19}>
                <svg width="22" height="28" viewBox="0 0 22 28">
                  <path d="M5 13V7.500a6 6 0 0 1 12 0V13" {...stroke(2.2, "#232e38")} />
                  <rect x="0" y="11.500" width="22" height="16" rx="3" fill="#232e38" />
                </svg>
              </AddressSlot>
              <Url>
                {host}
                <b>replit.dev</b>/structure/0700
              </Url>
              <AddressActions>
                <ActionSlot>
                  <svg width="28" height="28" viewBox="0 0 28 28" {...stroke(2.2, "#2b333b")}>
                    <circle cx="16.500" cy="11" r="10" />
                    <path d="M9 18.500L1 27M12.500 11h8" />
                  </svg>
                </ActionSlot>
                <ActionSlot>
                  <svg width="24" height="26" viewBox="0 0 24 26" {...stroke(2.2, "#2b333b")}>
                    <path d="M12 1l9 2.500q2 .7 2 2.500v7q0 7.500-11 12Q1 20.500 1 13V6q0-1.800 2-2.500zM7 12.500l3.500 3.500 6-6.500" />
                  </svg>
                </ActionSlot>
                <ActionSlot>
                  <svg width="26" height="26" viewBox="0 0 26 26" {...stroke(2.2, "#2b333b")}>
                    <path d="M1.500 3q-.5-2.200 1.700-1.500l20.500 10q1.800 1.500 0 3L3.200 24.500Q1 25.200 1.500 23q5.500-4.500 5.500-10T1.500 3z" />
                  </svg>
                </ActionSlot>
                <ActionSlot>
                  <svg width="24" height="25" viewBox="0 0 24 25" {...stroke(2.2, "#2b333b")}>
                    <path d="M12 1v16M6 11.500l6 6 6-6M1.200 18v3q0 3 3 3h15.600q3 0 3-3v-3" />
                  </svg>
                  <Badge />
                </ActionSlot>
                <ActionSlot>
                  <svg width="25" height="22" viewBox="0 0 25 22" {...stroke(2.2, "#2b333b")}>
                    <path d="M1 4h23M1 11h23M1 18h23M7 1.500v5M17 8.500v5M7 15.500v5" />
                  </svg>
                </ActionSlot>
              </AddressActions>
            </AddressBar>
            <AddressSide>
              <svg width="26" height="26" viewBox="0 0 26 26" {...stroke(2.2, "#2b333b")}>
                <path d="M13 1l10 4.500q1.500.8 1.500 2.500v10q0 1.500-1.500 2.500L13 25 3 20.500Q1.500 19.500 1.500 18V8q0-1.700 1.500-2.500zM2.500 6.500L13 12l10.500-5.500M13 12v12.500" />
              </svg>
              <IslandBar $h={48} />
            </AddressSide>
          </AddressRow>

          <InfoBar>
            <svg width="15" height="15" viewBox="0 0 15 15" {...stroke(2, "#2b333b")}>
              <path d="M1 1l13 13M14 1L1 14" />
            </svg>
            <AddressSlot $w={48} $ml={40}>
              <OperaO />
            </AddressSlot>
            <InfoText>Vuoi rendere Opera il tuo browser abituale?</InfoText>
            <InfoLink>Come si fa?</InfoLink>
            <InfoButton>Sì, impostalo come browser predefinito</InfoButton>
          </InfoBar>

          <Page>
            <Card $cut>
              <FieldTail />
              <RegisterWrap>
                <Btn $w={628} $h={152} $bg="#c2a1f0" $c="#fff" $pad={60.8} $ls={0.6}>
                  <UserPlus />
                  Registra Ospite
                </Btn>
              </RegisterWrap>
              <SuccessPanel>
                <SuccessTitle>
                  <GreenCheck />
                  <TitleText>Ospite creato: angela gemma - Camera 29</TitleText>
                </SuccessTitle>
                <ButtonRow>
                  <Btn $w={628} $bg="#2651cf" $c="#fafcff">
                    <Gift />
                    Assegna IQCode
                  </Btn>
                  <Btn $w={686.5} $bg="#9fcea5" $c="#f6fdf8">
                    <Send />
                    Invia via WhatsApp
                  </Btn>
                  <Btn $w={546} $bg="#a1a9ac" $c="#f6fdf8" $ls={0.1}>
                    <Copy />
                    Copia Codice
                  </Btn>
                  <Btn $w={345} $bg="#fff" $c="#0c0a09" $outline $ls={0.9}>
                    <Check />
                    Fatto
                  </Btn>
                </ButtonRow>
              </SuccessPanel>
            </Card>

            <Card>
              <CardTitle>
                <Users size={76} />
                <TitleText>Ospiti Registrati</TitleText>
              </CardTitle>
              <GuestCard>
                <GuestName>rocco ricco</GuestName>
                <GuestRow>
                  <Bed />
                  Camera 100
                </GuestRow>
                <GuestRow $ls={0.75}>
                  <Phone />
                  3333333333
                </GuestRow>
                <GuestRow>
                  <Mail />
                  eeeee@ffffit
                </GuestRow>
              </GuestCard>
            </Card>
          </Page>
        </Main>

        <Dialog>
          <DialogTitle>
            763d3f11-0725-42e9-
            <br />
            a8b8-3b4d4fd90357-00-18451jik70pxj.picard.repli
            <br />
            t.dev dice
          </DialogTitle>
          <DialogText>Errore durante l'assegnazione del codice</DialogText>
          <OkRing>
            <OkButton>OK</OkButton>
          </OkRing>
        </Dialog>
      </OperaWindow>
    </Desktop>
  );
}
